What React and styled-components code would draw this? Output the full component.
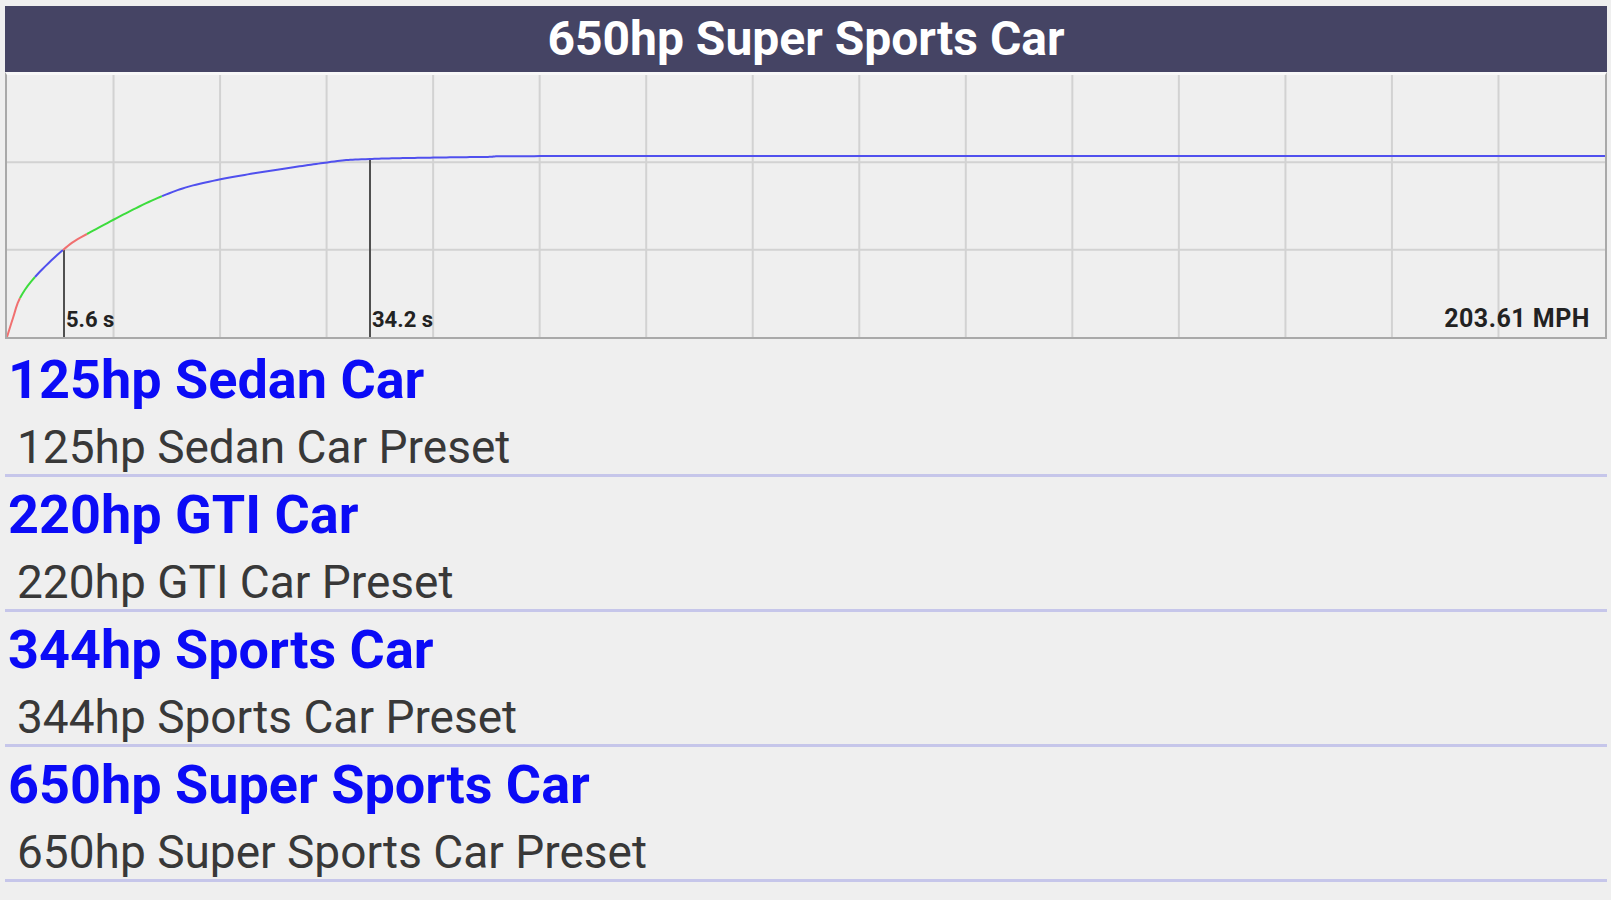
import React from "react";
import styled, { createGlobalStyle } from "styled-components";

const GlobalStyle = createGlobalStyle`
  html, body {
    margin: 0;
    padding: 0;
    background-color: #efefef;
    font-family: Roboto, "Noto Sans", "Liberation Sans", sans-serif;
    overflow: hidden;
  }
`;

const Page = styled.div`
  width: 1611px;
  height: 900px;
  box-sizing: border-box;
  padding: 6px 4px 0 5px;
  overflow: hidden;
`;

const Header = styled.div`
  height: 66px;
  line-height: 66px;
  background-color: #454464;
  color: #ffffff;
  font-size: 48px;
  font-weight: 700;
  text-align: center;
  white-space: nowrap;
`;

const ChartBox = styled.div`
  height: 267px;
  box-sizing: border-box;
  border-top: 3px solid #f8f8f8;
  border-left: 2px solid #a9a9a9;
  border-right: 2px solid #a9a9a9;
  border-bottom: 2px solid #a9a9a9;
  background-color: #efefef;

  svg {
    display: block;
  }
`;

const List = styled.div`
  margin-top: 3px;
`;

const Row = styled.div`
  padding-top: 6px;
  border-bottom: 3px solid #c6c6ea;
`;

const Title = styled.div`
  padding-left: 3px;
  font-size: 54px;
  line-height: 64px;
  font-weight: 700;
  color: #0b0bf6;
  white-space: nowrap;
`;

const Subtitle = styled.div`
  margin-top: 8px;
  padding-left: 12px;
  font-size: 46px;
  line-height: 54px;
  font-weight: 400;
  color: #383838;
  white-space: nowrap;
`;

const presets = [
  { id: 1, name: "125hp Sedan Car", desc: "125hp Sedan Car Preset" },
  { id: 2, name: "220hp GTI Car", desc: "220hp GTI Car Preset" },
  { id: 3, name: "344hp Sports Car", desc: "344hp Sports Car Preset" },
  { id: 4, name: "650hp Super Sports Car", desc: "650hp Super Sports Car Preset" },
];

// chart inner size (inside the borders)
const W = 1598;
const H = 262;

// speed curve, traced in chart pixels
const curvePts = [
  [0, 262], [6, 243], [13, 223], [28, 202], [56, 175], [80, 159],
  [153, 122], [210, 105], [316, 88], [363, 84], [473, 82], [613, 81], [1598, 81],
];

// gear colours, by x where the segment ends
const gears = [
  { end: 13, color: "#f07070" },
  { end: 28, color: "#3ddc3d" },
  { end: 56, color: "#5050ee" },
  { end: 80, color: "#f07070" },
  { end: 155, color: "#3ddc3d" },
  { end: W, color: "#5050ee" },
];

function sampleCurve(pts) {
  const out = [];
  for (let i = 0; i < pts.length - 1; i++) {
    const p0 = pts[i - 1] || pts[i];
    const p1 = pts[i];
    const p2 = pts[i + 1];
    const p3 = pts[i + 2] || pts[i + 1];
    const steps = Math.max(4, Math.ceil((p2[0] - p1[0]) / 3));
    for (let s = 0; s < steps; s++) {
      const t = s / steps;
      const t2 = t * t;
      const t3 = t2 * t;
      const x = 0.5 * (2 * p1[0] + (-p0[0] + p2[0]) * t + (2 * p0[0] - 5 * p1[0] + 4 * p2[0] - p3[0]) * t2 + (-p0[0] + 3 * p1[0] - 3 * p2[0] + p3[0]) * t3);
      const y = 0.5 * (2 * p1[1] + (-p0[1] + p2[1]) * t + (2 * p0[1] - 5 * p1[1] + 4 * p2[1] - p3[1]) * t2 + (-p0[1] + 3 * p1[1] - 3 * p2[1] + p3[1]) * t3);
      out.push([x, y]);
    }
  }
  out.push(pts[pts.length - 1]);
  return out;
}

function yAt(samples, x) {
  for (let i = 0; i < samples.length - 1; i++) {
    const a = samples[i];
    const b = samples[i + 1];
    if (x >= a[0] && x <= b[0]) {
      const k = (x - a[0]) / (b[0] - a[0] || 1);
      return a[1] + (b[1] - a[1]) * k;
    }
  }
  return samples[samples.length - 1][1];
}

function SpeedChart() {
  const samples = sampleCurve(curvePts);
  let start = 0;
  const segments = gears.map((g) => {
    const seg = [[start, yAt(samples, start)]];
    samples.forEach((p) => {
      if (p[0] > start && p[0] < g.end) seg.push(p);
    });
    seg.push([g.end, yAt(samples, g.end)]);
    start = g.end;
    return { color: g.color, points: seg.map((p) => p.join(",")).join(" ") };
  });

  const vLines = [];
  for (let k = 1; k < 15; k++) vLines.push((k * W) / 15);
  const hLines = [H / 3, (2 * H) / 3];
  const markers = [
    { x: 57, label: "5.6 s" },
    { x: 363, label: "34.2 s" },
  ];

  return (
    <svg width={W} height={H} viewBox={`0 0 ${W} ${H}`}>
      {vLines.map((x) => (
        <line key={x} x1={x} y1={0} x2={x} y2={H} stroke="#d2d2d2" strokeWidth="2" />
      ))}
      {hLines.map((y) => (
        <line key={y} x1={0} y1={y} x2={W} y2={y} stroke="#d2d2d2" strokeWidth="2" />
      ))}
      {markers.map((m) => (
        <g key={m.label}>
          <line x1={m.x} y1={yAt(samples, m.x)} x2={m.x} y2={H} stroke="#505050" strokeWidth="2" />
          <text x={m.x + 2} y={252} fontFamily="Roboto, sans-serif" fontWeight="700" fontSize="22" fill="#222">
            {m.label}
          </text>
        </g>
      ))}
      {segments.map((s, i) => (
        <polyline key={i} points={s.points} fill="none" stroke={s.color} strokeWidth="2" />
      ))}
      <text x={1583} y={252} textAnchor="end" fontFamily="Roboto, sans-serif" fontWeight="700" fontSize="25" letterSpacing="0.5" fill="#222">
        203.61 MPH
      </text>
    </svg>
  );
}

export default function App() {
  return (
    <Page>
      <GlobalStyle />
      <Header>650hp Super Sports Car</Header>
      <ChartBox>
        <SpeedChart />
      </ChartBox>
      <List>
        {presets.map((p) => (
          <Row key={p.id}>
            <Title>{p.name}</Title>
            <Subtitle>{p.desc}</Subtitle>
          </Row>
        ))}
      </List>
    </Page>
  );
}
